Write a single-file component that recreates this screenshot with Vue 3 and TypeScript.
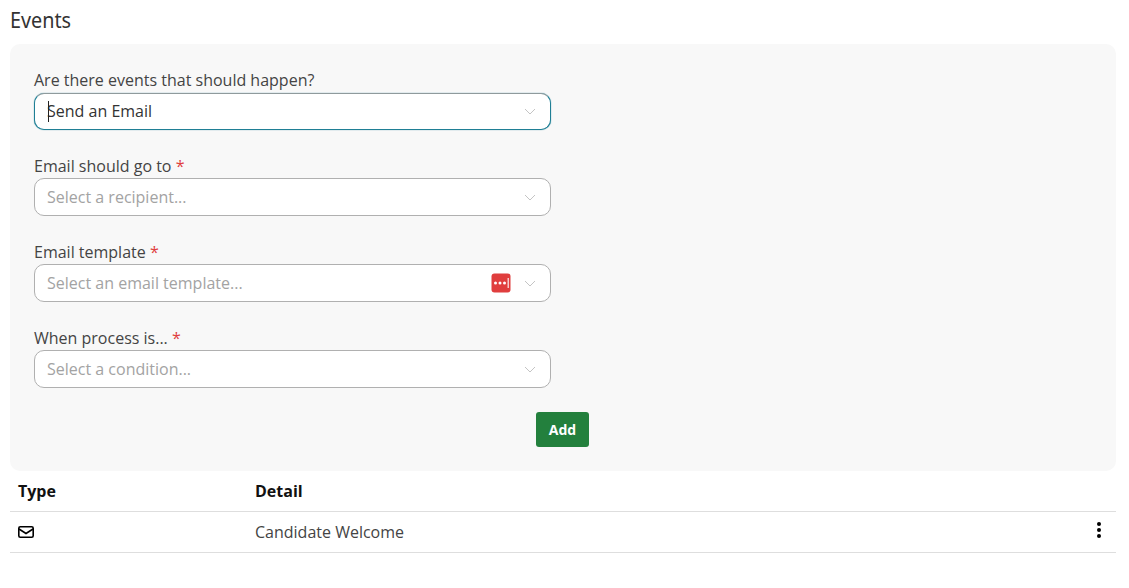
<template>
  <div class="page">
    <h2 class="title">Events</h2>
    <div class="panel">
      <div v-for="(f, i) in fields" :key="f.label" class="field">
        <label class="label">
          {{ f.label }}<span v-if="f.required" class="req"> *</span>
        </label>
        <div class="select" :class="{ focused: i === 0 }">
          <span v-if="i === 0" class="caret"></span>
          <span class="value" :class="{ placeholder: !f.value }">{{ f.value || f.placeholder }}</span>
          <span v-if="f.badge" class="badge">
            <svg width="20" height="20" viewBox="0 0 20 20">
              <rect x="0.5" y="0.500" width="19" height="19" rx="3" fill="#e03e3e" />
              <circle cx="4.500" cy="10" r="1.5" fill="#fff" />
              <circle cx="9" cy="10" r="1.5" fill="#fff" />
              <circle cx="13.500" cy="10" r="1.5" fill="#fff" />
              <rect x="16.500" y="5" width="1.500" height="10" fill="#f6c9c9" />
            </svg>
          </span>
          <svg class="chevron" width="12" height="7" viewBox="0 0 12 7">
            <path d="M1 1l5 5 5-5" fill="none" stroke="#c4c4c4" stroke-width="1" />
          </svg>
        </div>
      </div>
      <div class="actions">
        <button class="add" type="button">Add</button>
      </div>
    </div>
    <div class="row head">
      <div class="type">Type</div>
      <div class="detail">Detail</div>
    </div>
    <div class="row body">
      <div class="type">
        <svg width="16" height="12" viewBox="0 0 16 12" class="mail">
          <rect x="0.800" y="0.800" width="14.400" height="10.400" rx="1.500" fill="none" stroke="#000" stroke-width="1.600" />
          <path d="M1 3l7 4.500L15 3" fill="none" stroke="#000" stroke-width="1.600" />
        </svg>
      </div>
      <div class="detail">Candidate Welcome</div>
      <div class="more">
        <i></i><i></i><i></i>
      </div>
    </div>
  </div>
</template>

<script setup lang="ts">
interface Field {
  label: string;
  required: boolean;
  value?: string;
  placeholder?: string;
  badge?: boolean;
}

const fields: Field[] = [
  { label: 'Are there events that should happen?', required: false, value: 'Send an Email' },
  { label: 'Email should go to', required: true, placeholder: 'Select a recipient...' },
  { label: 'Email template', required: true, placeholder: 'Select an email template...', badge: true },
  { label: 'When process is...', required: true, placeholder: 'Select a condition...' },
];
</script>

<style>
body {
  background: #fff;
}
</style>

<style scoped>
* {
  box-sizing: border-box;
}

.page {
  padding: 0 13px 0 10px;
  font-family: 'Open Sans', 'Noto Sans', sans-serif;
  color: #333;
}

.title {
  margin: 0;
  height: 44px;
  padding-top: 6px;
  font-family: 'Noto Sans', sans-serif;
  font-size: 22px;
  font-weight: 400;
  line-height: 26px;
  color: #333;
  transform: scaleX(0.9);
  transform-origin: left;
}

.panel {
  height: 427px;
  padding: 24px 24px 0;
  background: #f8f8f8;
  border-radius: 10px;
}

.field {
  height: 86px;
}

.label {
  display: block;
  height: 24px;
  font-size: 16px;
  line-height: 24px;
  color: #444;
}

.field:first-child .label {
  height: 25px;
}

.req {
  color: #e03e3e;
}

.select {
  position: relative;
  display: flex;
  align-items: center;
  width: 517px;
  height: 38px;
  padding: 0 14px 0 12px;
  background: #fff;
  border: 1px solid #b0b0b0;
  border-radius: 10px;
  font-size: 16px;
}

.select.focused {
  height: 37px;
  border: 1px solid #1f7f95;
  border-top-color: #8f9a9c;
  box-shadow: 0 0 1px #1f7f95;
}

.select.focused .value {
  margin-bottom: 2px;
}

.caret {
  position: absolute;
  left: 13px;
  top: 7px;
  width: 1px;
  height: 21px;
  background: #222;
}

.value {
  flex: 1;
  color: #333;
}

.value.placeholder {
  color: #a3a3a3;
}

.badge {
  display: flex;
  margin-right: 13px;
}

.actions {
  display: flex;
  justify-content: center;
}

.add {
  width: 53px;
  height: 35px;
  margin-right: 1px;
  padding: 0;
  background: #23803d;
  border: none;
  border-radius: 3px;
  font-family: 'Open Sans', sans-serif;
  font-size: 14px;
  font-weight: 700;
  color: #fff;
}

.row {
  display: flex;
  align-items: center;
  border-bottom: 1px solid #dedede;
}

.head {
  height: 41px;
  font-size: 16px;
  font-weight: 700;
  color: #111;
}

.body {
  height: 41px;
  font-size: 16px;
  color: #444;
}

.type {
  width: 245px;
  padding-left: 8px;
}

.mail {
  display: block;
}

.detail {
  flex: 1;
}

.more {
  display: flex;
  flex-direction: column;
  gap: 2px;
  margin-right: 15px;
  margin-top: -4px;
}

.more i {
  display: block;
  width: 4px;
  height: 4px;
  border-radius: 50%;
  background: #000;
}
</style>
